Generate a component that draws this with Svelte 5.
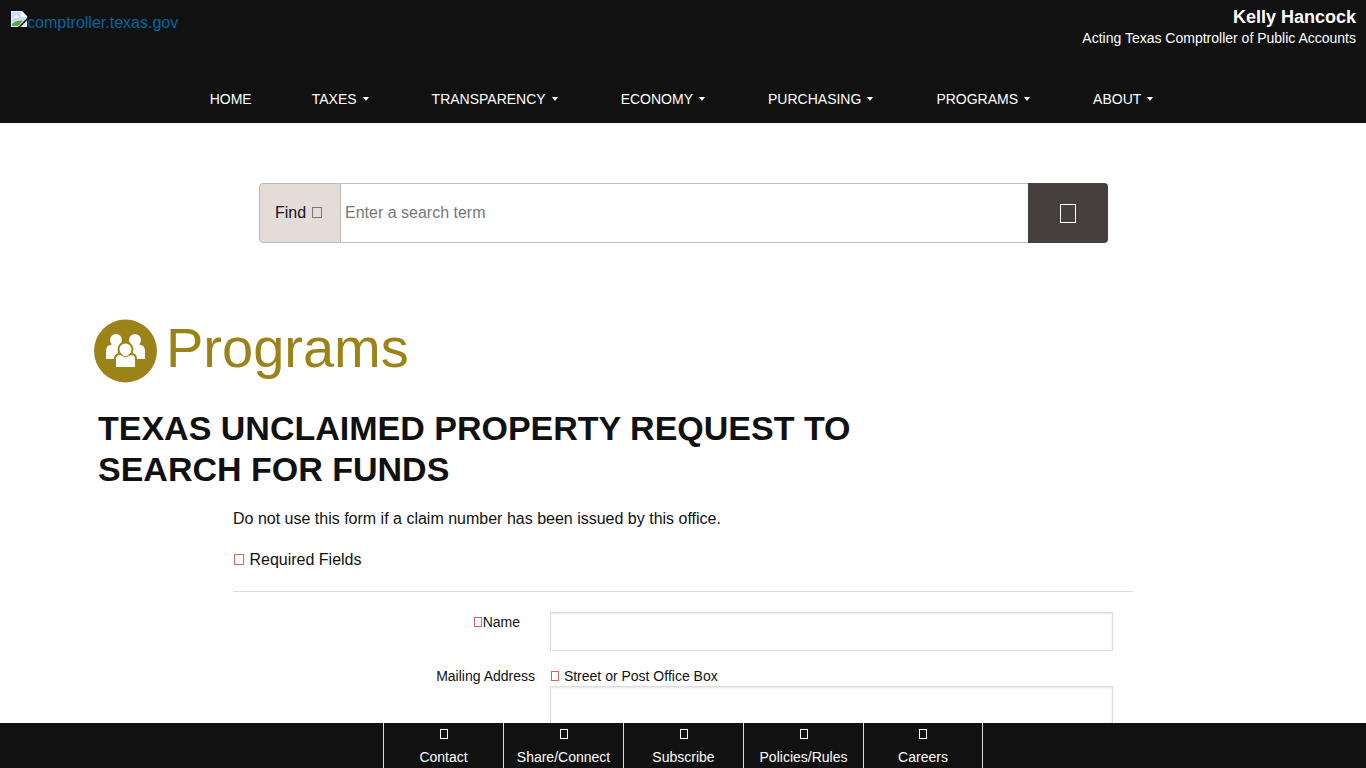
<script lang="ts">
  type NavItem = { label: string; menu: boolean };

  const nav: NavItem[] = [
    { label: "Home", menu: false },
    { label: "Taxes", menu: true },
    { label: "Transparency", menu: true },
    { label: "Economy", menu: true },
    { label: "Purchasing", menu: true },
    { label: "Programs", menu: true },
    { label: "About", menu: true },
  ];

  const quickLinks = ["Contact", "Share/Connect", "Subscribe", "Policies/Rules", "Careers"];

  let term = $state("");
  let name = $state("");
  let street = $state("");
</script>

<header>
  <div class="top">
    <a class="logo" href="/">
      <svg width="16" height="16" viewBox="0 0 16 16" aria-hidden="true">
        <path d="M0 0h11l5 5v2L7 16H0z" fill="#f4f4f4" />
        <path d="M1 1h9v5h5v1L7 15H1z" fill="#c9dcf5" />
        <path d="M10 0l6 6h-6z" fill="#fff" />
        <path d="M3 6c0-2 3-2.500 3.500-.8C8 5 8 7 7 7H3.500C2.500 7 2.500 6.200 3 6z" fill="#fff" />
        <path d="M1 15v-2C4 10 8 9 12 10L7 15z" fill="#56a83c" />
        <path d="M16 9.500V16H9.500z" fill="#f4f4f4" />
        <path d="M15 12v3h-3z" fill="#c9dcf5" />
      </svg>comptroller.texas.gov
    </a>
    <div class="official">
      <strong>Kelly Hancock</strong>
      <span>Acting Texas Comptroller of Public Accounts</span>
    </div>
  </div>
  <nav aria-label="Main">
    {#each nav as item}
      <a href="/{item.label.toLowerCase()}/">
        {item.label}{#if item.menu}<i class="caret"></i>{/if}
      </a>
    {/each}
  </nav>
</header>

<main>
  <form class="search" role="search" onsubmit={(e) => e.preventDefault()}>
    <label for="q">Find <i class="glyph"></i></label>
    <input id="q" type="text" placeholder="Enter a search term" bind:value={term} />
    <button type="submit" aria-label="Search"><i class="glyph large"></i></button>
  </form>

  <div class="page">
    <div class="section">
      <svg width="64" height="64" viewBox="0 0 64 64" aria-hidden="true">
        <circle cx="31.500" cy="32" r="31.500" fill="#9c8317" />
        <g fill="#fff">
          <circle cx="22" cy="21" r="6" />
          <circle cx="41" cy="21" r="6" />
          <path d="M12 40V32q0-5 4-6l3-1q3 3 6 0l4 1 4 14z" />
          <path d="M51 40V32q0-5-4-6l-3-1q-3 3-6 0l-4 1-4 14z" />
        </g>
        <g fill="#fff" stroke="#9c8317" stroke-width="4" paint-order="stroke">
          <path d="M22 48V40q0-4 4-4h11q4 0 4 4v8z" />
          <circle cx="31.500" cy="30.500" r="6" />
        </g>
        <path d="M26 36h11v3H26z" fill="#fff" />
        <path d="M25.500 35q6 5 12 0" fill="none" stroke="#9c8317" stroke-width="1" />
      </svg>
      <span>Programs</span>
    </div>
    <h1>Texas Unclaimed Property Request to Search for Funds</h1>
  </div>

  <form class="request" onsubmit={(e) => e.preventDefault()}>
    <p>Do not use this form if a claim number has been issued by this office.</p>
    <p><i class="glyph required"></i> Required Fields</p>
    <hr />
    <div class="row">
      <label class="side inset" for="name"><i class="glyph small required"></i>Name</label>
      <input id="name" type="text" bind:value={name} />
    </div>
    <div class="row">
      <span class="side">Mailing Address</span>
      <div class="field">
        <label for="street"><i class="glyph small required"></i> Street or Post Office Box</label>
        <input id="street" type="text" bind:value={street} />
      </div>
    </div>
  </form>
</main>

<footer>
  {#each quickLinks as link}
    <a href="/about/"><i class="glyph small"></i>{link}</a>
  {/each}
</footer>

<style>
  :global(body) {
    background: #fff;
    color: #111;
    font: 16px/24px "Liberation Sans", Arial, sans-serif;
    overflow: hidden;
  }
  header {
    background: #111;
    color: #fff;
  }
  .top {
    display: flex;
    justify-content: space-between;
    height: 75px;
    padding: 0 10px 0 11px;
  }
  .logo {
    display: flex;
    align-items: flex-start;
    height: 24px;
    padding-top: 11px;
    color: #0065a0;
    text-decoration: none;
  }
  .official {
    display: flex;
    flex-direction: column;
    padding-top: 6px;
    text-align: right;
    font-size: 14px;
    line-height: 20px;
  }
  .official strong {
    font-size: 18px;
    line-height: 22px;
  }
  nav {
    display: flex;
    justify-content: center;
    gap: 60px;
    height: 48px;
    line-height: 48px;
    font-size: 14px;
  }
  nav a {
    display: flex;
    align-items: center;
    color: #fff;
    text-decoration: none;
    text-transform: uppercase;
  }
  .caret {
    margin: 0 3px 0 6px;
    border: 3px solid transparent;
    border-top: 4px solid #fff;
    border-bottom: 0;
  }
  .glyph {
    display: inline-block;
    box-sizing: border-box;
    width: 10px;
    height: 11px;
    margin: 0 1px;
    border: 1px solid currentColor;
    opacity: 0.7;
  }
  .glyph.small {
    width: 8px;
    height: 10px;
  }
  .glyph.large {
    width: 16px;
    height: 19px;
    margin: 0;
    opacity: 1;
  }
  .glyph.required {
    color: #c6201b;
  }
  .search {
    display: flex;
    box-sizing: border-box;
    max-width: 850px;
    height: 60px;
    margin: 60px auto 0;
    padding-left: 1px;
  }
  .search label {
    box-sizing: border-box;
    width: 82px;
    padding-left: 15px;
    border: 1px solid #bfb9b5;
    border-radius: 4px 0 0 4px;
    background: #e3dcd9;
    line-height: 58px;
  }
  .search label .glyph {
    opacity: 0.5;
  }
  .search input {
    flex: 1;
    min-width: 0;
    padding: 0 4px;
    border: 1px solid #bbb;
    border-width: 1px 0;
    font: inherit;
  }
  .search input::placeholder {
    color: #777;
  }
  .search button {
    display: flex;
    align-items: center;
    justify-content: center;
    width: 80px;
    padding: 0;
    border: 0;
    border-radius: 0 4px 4px 0;
    background: #45403d;
    color: #fff;
  }
  .page {
    max-width: 1178px;
    margin: 76px auto 0;
  }
  .section {
    display: flex;
    align-items: center;
    gap: 8px;
    color: #9c8317;
    font-size: 56px;
    line-height: 58px;
  }
  .section span {
    padding-bottom: 6px;
  }
  h1 {
    max-width: 800px;
    margin: 25px 0 0 4px;
    font-size: 34px;
    line-height: 41px;
    text-transform: uppercase;
  }
  .request {
    max-width: 900px;
    margin: 17px auto 0;
  }
  .request p {
    margin: 0 0 17px;
  }
  hr {
    height: 1px;
    margin: 19px 0 20px;
    border: 0;
    background: #ddd;
  }
  .row {
    display: grid;
    grid-template-columns: 302px 1fr;
    gap: 15px;
    padding-right: 20px;
    margin-bottom: 15px;
    font-size: 14px;
    line-height: 20px;
  }
  .side {
    text-align: right;
  }
  .inset {
    padding-right: 15px;
  }
  .field label {
    display: block;
  }
  .request input {
    box-sizing: border-box;
    width: 100%;
    height: 39px;
    padding: 8px;
    border: 1px solid #ddd;
    box-shadow: inset 0 1px 2px rgba(0, 0, 0, 0.1);
    font: inherit;
  }
  footer {
    position: fixed;
    right: 0;
    bottom: 0;
    left: 0;
    display: flex;
    justify-content: center;
    height: 45px;
    background: #111;
  }
  footer a {
    display: flex;
    flex-direction: column;
    align-items: center;
    box-sizing: border-box;
    width: 120px;
    padding-top: 6px;
    border-left: 1px solid #ddd;
    color: #fff;
    font-size: 14px;
    line-height: 20px;
    text-decoration: none;
  }
  footer a:last-child {
    border-right: 1px solid #ddd;
  }
  footer .glyph {
    margin: 0 0 8px;
    opacity: 1;
  }
</style>
